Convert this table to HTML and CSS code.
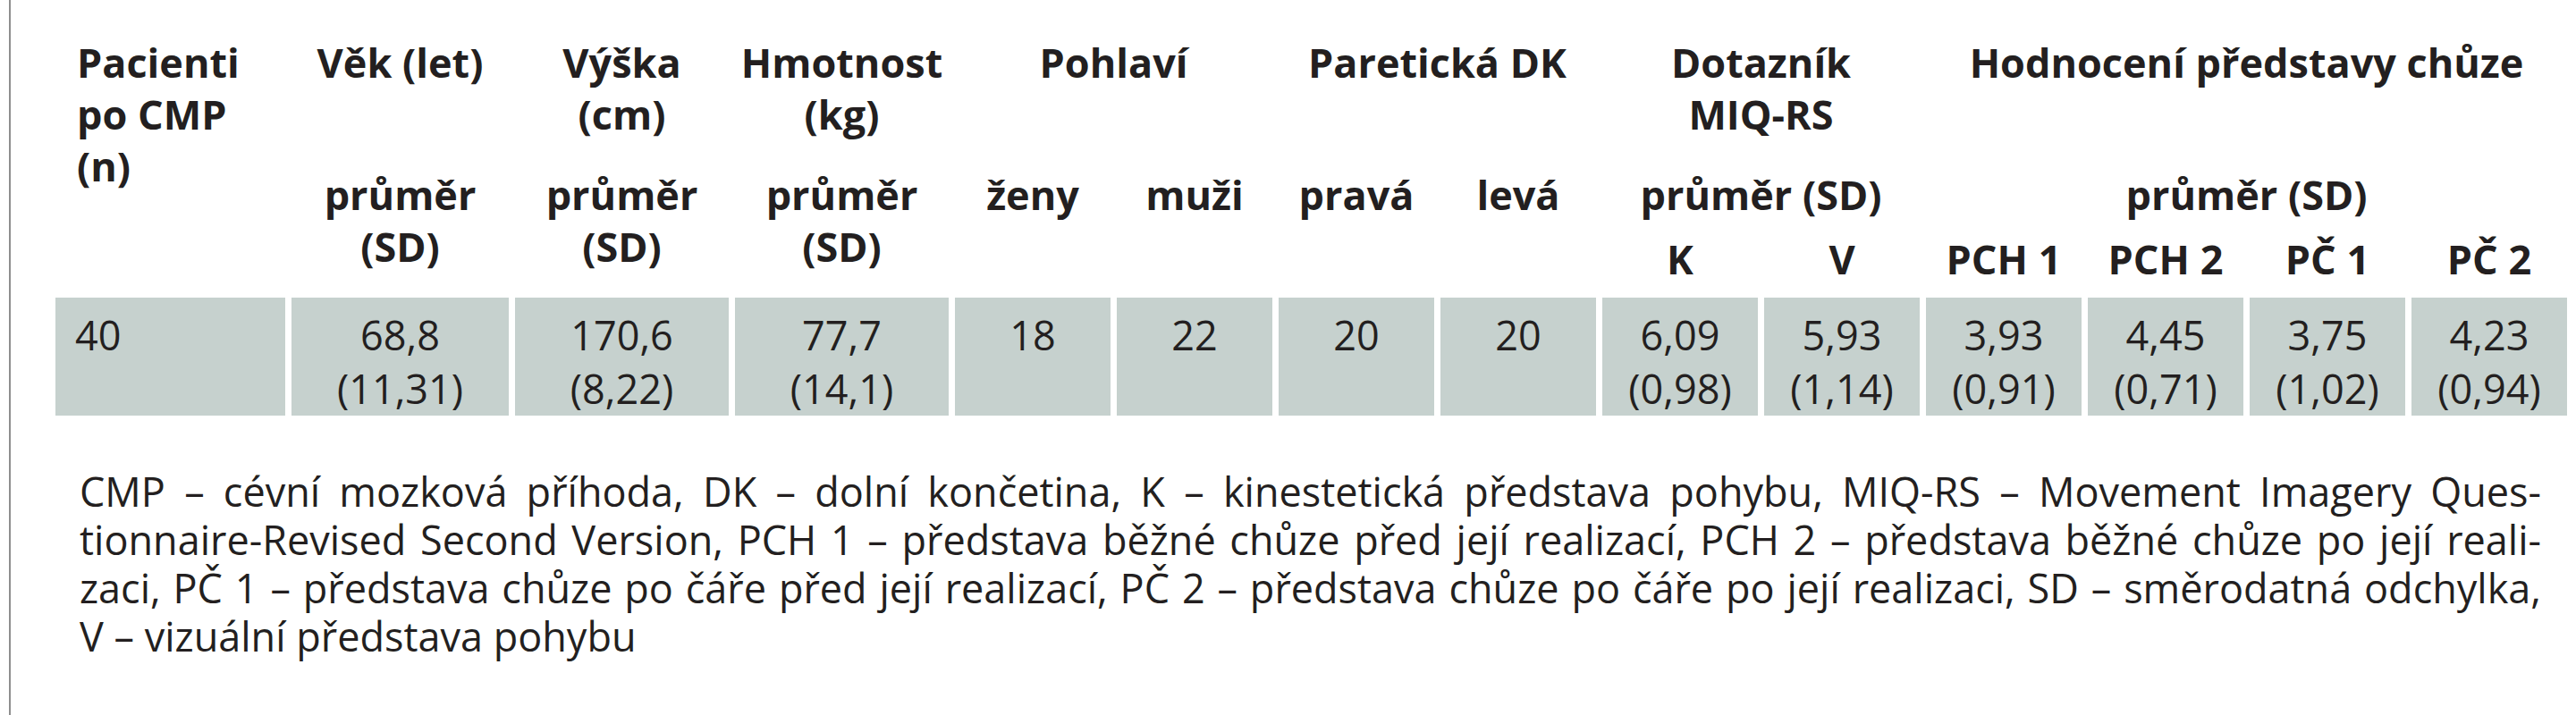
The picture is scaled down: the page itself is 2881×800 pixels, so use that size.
FILE: index.html
```html
<!DOCTYPE html>
<html lang="cs">
<head>
<meta charset="utf-8">
<title>Tabulka</title>
<link rel="stylesheet" href="styles.css">
</head>
<body>
<div class="frame">
  <table class="tbl">
    <colgroup>
      <col class="c-pac"><col class="c-vek"><col class="c-vys"><col class="c-hm">
      <col class="c-n"><col class="c-n"><col class="c-n"><col class="c-n"><col class="c-n">
      <col class="c-n"><col class="c-n"><col class="c-n"><col class="c-n"><col class="c-n">
    </colgroup>
    <thead>
      <tr class="r1">
        <th class="pac" rowspan="3">Pacienti<br>po CMP<br>(n)</th>
        <th>Věk (let)</th>
        <th>Výška<br>(cm)</th>
        <th>Hmotnost<br>(kg)</th>
        <th colspan="2">Pohlaví</th>
        <th colspan="2">Paretická DK</th>
        <th colspan="2">Dotazník<br>MIQ-RS</th>
        <th colspan="4">Hodnocení představy chůze</th>
      </tr>
      <tr class="r2">
        <th>průměr</th>
        <th>průměr</th>
        <th>průměr</th>
        <th rowspan="2">ženy</th>
        <th rowspan="2">muži</th>
        <th rowspan="2">pravá</th>
        <th rowspan="2">levá</th>
        <th colspan="2">průměr (SD)</th>
        <th colspan="4">průměr (SD)</th>
      </tr>
      <tr class="r3">
        <th>(SD)</th>
        <th>(SD)</th>
        <th>(SD)</th>
        <th class="sub">K</th>
        <th class="sub">V</th>
        <th class="sub">PCH 1</th>
        <th class="sub">PCH 2</th>
        <th class="sub">PČ 1</th>
        <th class="sub">PČ 2</th>
      </tr>
    </thead>
    <tbody>
      <tr>
        <td class="first">40</td>
        <td>68,8<br>(11,31)</td>
        <td>170,6<br>(8,22)</td>
        <td>77,7<br>(14,1)</td>
        <td>18</td>
        <td>22</td>
        <td>20</td>
        <td>20</td>
        <td>6,09<br>(0,98)</td>
        <td>5,93<br>(1,14)</td>
        <td>3,93<br>(0,91)</td>
        <td>4,45<br>(0,71)</td>
        <td>3,75<br>(1,02)</td>
        <td>4,23<br>(0,94)</td>
      </tr>
    </tbody>
  </table>
  <p class="note">
    <span class="line just">CMP – cévní mozková příhoda, DK – dolní končetina, K – kinestetická představa pohybu, MIQ-RS – Movement Imagery Ques-</span>
    <span class="line just">tionnaire-Revised Second Version, PCH 1 – představa běžné chůze před její realizací, PCH 2 – představa běžné chůze po její reali-</span>
    <span class="line just">zaci, PČ 1 – představa chůze po čáře před její realizací, PČ 2 – představa chůze po čáře po její realizaci, SD – směrodatná odchylka,</span>
    <span class="line">V – vizuální představa pohybu</span>
  </p>
</div>
</body>
</html>
```
FILE: styles.css
```css
html, body {
  margin: 0;
  padding: 0;
  background: #ffffff;
}

body {
  width: 2881px;
  height: 800px;
  overflow: hidden;
  font-family: "Open Sans", "Noto Sans", "DejaVu Sans", sans-serif;
  color: #231f20;
}

.frame {
  margin-left: 10px;
  height: 800px;
  border-left: 2px solid #8e8e8e;
  padding: 41px 0 0 43px;
  box-sizing: border-box;
}

.tbl {
  table-layout: fixed;
  width: 2823px;
  border-collapse: separate;
  border-spacing: 7px 0;
}

.c-pac { width: 257px; }
.c-vek { width: 243px; }
.c-vys { width: 239px; }
.c-hm { width: 239px; }
.c-n { width: 174px; }

.tbl th {
  padding: 0;
  font-weight: 700;
  font-size: 45px;
  line-height: 58px;
  vertical-align: top;
  text-align: center;
  white-space: nowrap;
}

.tbl th.pac {
  text-align: left;
  padding-left: 24px;
}

.r1 { height: 148px; }
.r2 { height: 58px; }
.r3 { height: 86px; }

.tbl th.sub {
  padding-top: 14px;
}

.tbl td {
  background: #c6d1ce;
  font-size: 45px;
  line-height: 60px;
  padding: 12px 6px 0;
  text-align: center;
  vertical-align: top;
  white-space: nowrap;
}

.tbl td.first {
  text-align: left;
  padding-left: 22px;
}

.note {
  margin: 58px 0 0 34px;
  width: 2753px;
  font-size: 45px;
  line-height: 54px;
}

.line {
  display: block;
  white-space: nowrap;
}

.line.just {
  white-space: normal;
  word-spacing: -4px;
  text-align: justify;
  text-align-last: justify;
}
```
